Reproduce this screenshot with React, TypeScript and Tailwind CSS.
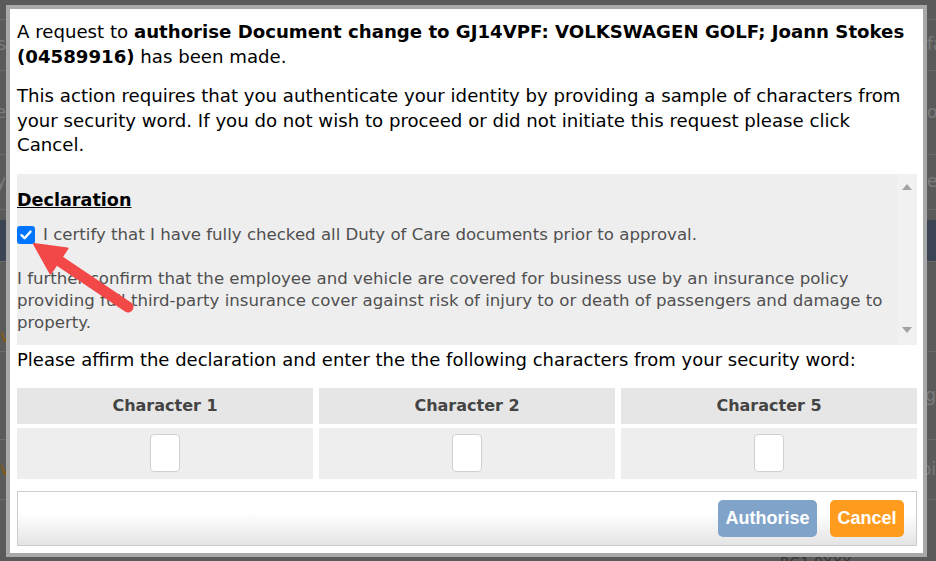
import React from 'react';

const leftRows = [
  { h: 'h-[20px]', text: '', cls: 'border-b border-[#6a6a6a]' },
  { h: 'h-[51px]', text: 'Status', cls: 'border-b border-[#6a6a6a]' },
  { h: 'h-[84px]', text: 'Vehicle', cls: 'border-b border-[#6a6a6a]' },
  { h: 'h-[55px]', text: 'Policy', cls: 'border-b border-[#6a6a6a]' },
];

const rightRows = [
  { h: 'h-[20px]', text: '', cls: 'border-b border-[#6a6a6a]' },
  { h: 'h-[51px]', text: 'fa', cls: 'border-b border-[#6a6a6a]' },
  { h: 'h-[84px]', text: 'of', cls: 'border-b border-[#6a6a6a]' },
  { h: 'h-[55px]', text: 'ee', cls: 'border-b border-[#6a6a6a]' },
];

const Strip = ({ rows, align }: { rows: typeof leftRows; align: 'left' | 'right' }) => (
  <div className="flex flex-col h-full overflow-hidden">
    {rows.map((r, i) => (
      <div
        key={i}
        className={`${r.h} ${r.cls} flex items-center overflow-hidden whitespace-nowrap text-[17px] text-[#7a7a7a] ${
          align === 'right' ? 'justify-end' : 'justify-start'
        }`}
      >
        {r.text}
      </div>
    ))}
    <div className="h-[10px]" />
    <div className="h-[42px] bg-[#3b4452] border-b border-[#6a6a6a]" />
    <div className="h-[90px] border-b border-[#6a6a6a] flex items-end overflow-hidden whitespace-nowrap text-[17px] text-[#8a5a10] justify-start pb-[2px]">
      {align === 'left' ? '' : 'v'}
    </div>
    <div className="h-[88px] border-b border-[#6a6a6a] flex items-center overflow-hidden whitespace-nowrap text-[17px] text-[#7a7a7a] justify-end">
      {align === 'left' ? 'Reg' : ''}
    </div>
    <div className="h-[60px] border-b border-[#6a6a6a] flex items-center overflow-hidden whitespace-nowrap text-[17px] text-[#7a7a7a] justify-end">
      {align === 'left' ? 'Expi' : <span className="text-[#8a5a10] self-center w-full text-left">v</span>}
    </div>
    <div className="flex-1" />
  </div>
);

const CharCell = ({ label }: { label: string }) => (
  <div className="flex flex-col gap-[4px]">
    <div className="h-[36px] bg-[#e6e6e6] flex items-center justify-center text-[16px] font-bold text-[#444444]">
      {label}
    </div>
    <div className="h-[51px] bg-[#eeeeee] flex items-center justify-center">
      <input
        type="text"
        maxLength={1}
        className="w-[30px] h-[38px] bg-white border border-[#d0d0d0] rounded-[4px] outline-none text-center"
      />
    </div>
  </div>
);

export default function App() {
  return (
    <div className="relative w-[936px] h-[561px] overflow-hidden bg-[#5a5a5a] font-['DejaVu_Sans',Verdana,sans-serif]">
      {/* page behind the modal */}
      <div className="flex h-full w-full">
        <div className="w-[6px] h-full">
          <Strip rows={leftRows} align="right" />
        </div>
        <div className="flex-1" />
        <div className="w-[9px] h-full">
          <Strip rows={rightRows} align="left" />
        </div>
      </div>
      <div className="absolute left-[780px] top-[552px] text-[14px] text-[#333] whitespace-nowrap">RG1 0XXX</div>

      {/* modal */}
      <div className="absolute left-[6px] top-[5px] w-[921px] h-[552px] border-4 border-[#a8a8a8] bg-white">
        <div className="flex flex-col h-full pl-[7px] pr-[6px] pt-[10px]">
          <p className="text-[18.15px] leading-[25px] text-black">
            A request to <b>authorise Document change to GJ14VPF: VOLKSWAGEN GOLF; Joann Stokes (04589916)</b> has
            been made.
          </p>
          <p className="mt-[15px] text-[18.15px] leading-[24.5px] text-black">
            This action requires that you authenticate your identity by providing a sample of characters from your
            security word. If you do not wish to proceed or did not initiate this request please click Cancel.
          </p>

          <div className="mt-[16px] h-[171px] shrink-0 bg-[#eeeeee] flex overflow-hidden">
            <div className="flex-1 pt-[15px]">
              <div className="text-[17.6px] leading-[22px] font-bold underline text-black">Declaration</div>
              <label className="mt-[13px] flex items-center gap-[8px] text-[16.6px] leading-[22px] text-[#505050]">
                <span className="w-[18px] h-[18px] rounded-[3px] bg-[#0075ff] flex items-center justify-center shrink-0">
                  <svg width="14" height="14" viewBox="0 0 14 14">
                    <path d="M2.5 7.2 L5.6 10.2 L11.5 3.6" fill="none" stroke="white" strokeWidth="2.4" strokeLinecap="round" strokeLinejoin="round" />
                  </svg>
                </span>
                I certify that I have fully checked all Duty of Care documents prior to approval.
              </label>
              <p className="mt-[22px] text-[16.6px] leading-[22px] text-[#505050]">
                I further confirm that the employee and vehicle are covered for business use by an insurance policy
                providing full third-party insurance cover against risk of injury to or death of passengers and damage
                to property.
              </p>
            </div>
            <div className="w-[20px] bg-[#f1f1f1] flex flex-col items-center justify-between pt-[10px] pb-[12px]">
              <svg width="10" height="6" viewBox="0 0 10 6">
                <path d="M0 6 L5 0 L10 6 Z" fill="#a3a3a3" />
              </svg>
              <svg width="10" height="6" viewBox="0 0 10 6">
                <path d="M0 0 L5 6 L10 0 Z" fill="#a3a3a3" />
              </svg>
            </div>
          </div>

          <p className="mt-[3px] text-[18px] leading-[24px] text-black">
            Please affirm the declaration and enter the the following characters from your security word:
          </p>

          <div className="mt-[16px] grid grid-cols-3 gap-x-[6px]">
            <CharCell label="Character 1" />
            <CharCell label="Character 2" />
            <CharCell label="Character 5" />
          </div>

          <div className="mt-[12px] h-[55px] border border-[#cccccc] bg-gradient-to-b from-white from-40% to-[#e4e4e4] flex items-start justify-end gap-[13px] pt-[8px] pr-[12px]">
            <button className="w-[99px] h-[37px] rounded-[5px] bg-[#7fa3c9] text-white text-[18px] font-bold font-['Liberation_Sans',Arial,sans-serif]">
              Authorise
            </button>
            <button className="w-[74px] h-[37px] rounded-[5px] bg-[#ff9c1d] text-white text-[18px] font-bold font-['Liberation_Sans',Arial,sans-serif]">
              Cancel
            </button>
          </div>
        </div>
      </div>

      {/* annotation arrow */}
      <svg className="absolute left-0 top-0 pointer-events-none" width="936" height="561" viewBox="0 0 936 561">
        <line x1="58" y1="260" x2="128" y2="307" stroke="#f34848" strokeWidth="11" strokeLinecap="round" />
        <polygon points="34,244 67.5,248.5 50.5,273.5" fill="#f34848" strokeLinejoin="round" stroke="#f34848" strokeWidth="2" />
      </svg>
    </div>
  );
}
